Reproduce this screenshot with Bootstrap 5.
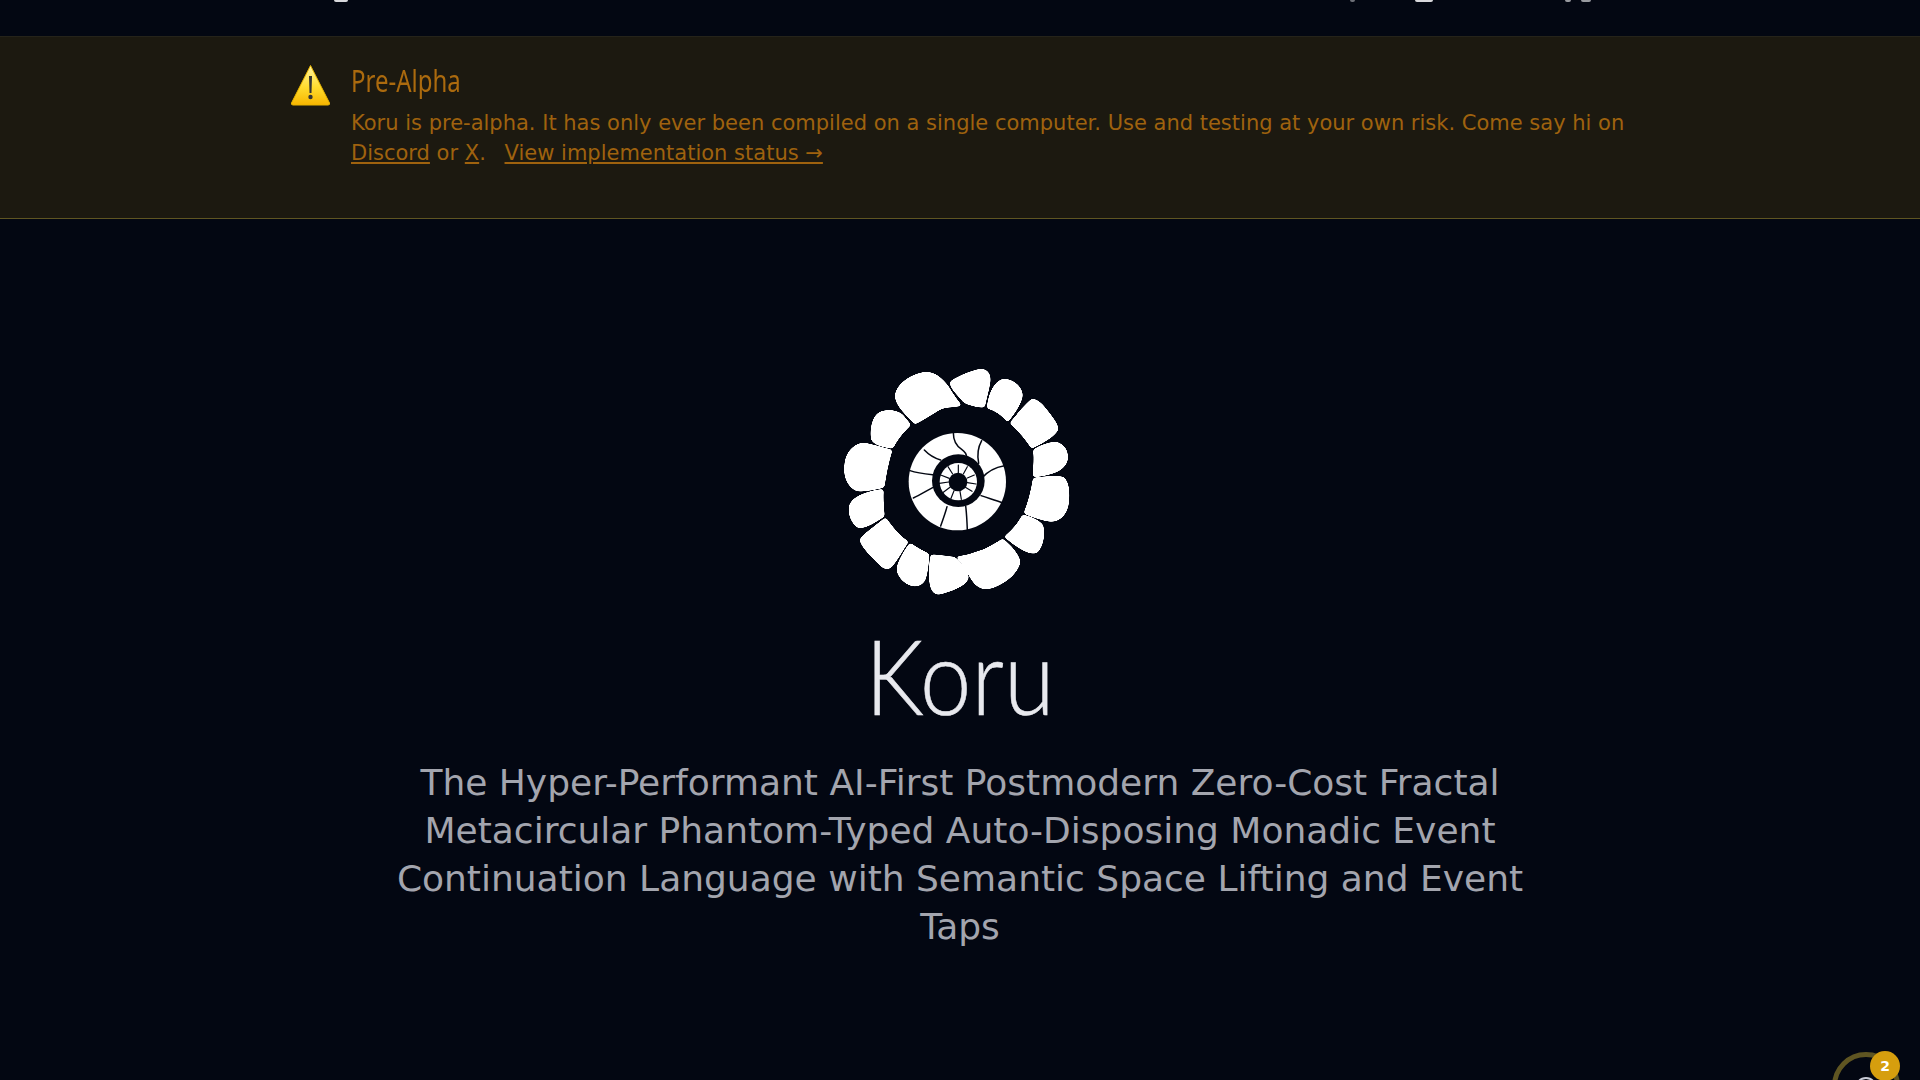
<!DOCTYPE html>
<html lang="en"><head><meta charset="utf-8"><title>Koru</title>
<link href="https://cdn.jsdelivr.net/npm/bootstrap@5.3.0/dist/css/bootstrap.min.css" rel="stylesheet">
<style>
html,body{height:100%;overflow:hidden}
body{background:#030712;font-family:"DejaVu Sans",sans-serif}
.top-strip{height:36px;overflow:hidden;padding-left:334px}
.frag{display:block;height:2px;background:#d8d8dc;border-radius:0 0 3px 3px}
.frag-a{width:14px}.frag-b{width:5px;margin-left:1002px;opacity:.5}.frag-c{width:18px;margin-left:60px}.frag-d{width:6px;margin-left:132px;opacity:.7}.frag-e{width:10px;margin-left:10px;opacity:.7}
.warn-band{height:183px;background:#1c1910;border-top:1px solid #25231a;border-bottom:1px solid #5f5522;padding:24px 0 0 290px}
.warn-icon{width:41px;height:42px;flex:none;margin-top:3px}
.warn-body{width:1300px;margin-left:20px;color:#9f620e;font-size:21px;line-height:30px}
.warn-title{font-family:"Noto Sans",sans-serif;font-weight:400;font-size:30px;line-height:40px;margin:0 0 7px;color:#ab6a0e;display:block;transform:scaleX(.8);transform-origin:left center}
.warn-body a{color:inherit}
.gap-link{margin-left:12px}
.hero-wrap{padding-top:131px}
.koru-logo{width:280px;height:260px;display:block}
.petal path{filter:url(#rnd)}
.koru-name{font-family:Lato,sans-serif;font-weight:300;font-size:104px;line-height:110px;color:#e8e9ee;margin:10px 0 0;transform:scaleX(.885);-webkit-text-stroke:.6px #e8e9ee}
.koru-sub{width:1160px;font-size:36px;line-height:48px;color:#a3a5ae;margin:29px 0 0}
.float-ring{position:fixed;left:1832px;top:1052px;width:68px;height:68px;border:5px solid #5f5522;border-radius:50%}
.float-inner{position:absolute;left:18px;top:20px;width:22px;height:22px;border:2px solid #c9cbd6;border-radius:50%}
.float-num{position:fixed;left:1870px;top:1051px;width:30px;height:30px;border-radius:50%;background:#d69e0e;color:#fff;font-size:14px;font-weight:700}
</style></head>
<body>
<nav class="top-strip d-flex align-items-start"><span class="frag frag-a"></span><span class="frag frag-b"></span><span class="frag frag-c"></span><span class="frag frag-d"></span><span class="frag frag-e"></span></nav>
<section class="warn-band d-flex align-items-start">
<svg class="warn-icon" viewBox="0 0 41 42"><defs><linearGradient id="wg" x1="0" y1="0" x2="0" y2="1"><stop offset="0" stop-color="#fff3a0"/><stop offset=".55" stop-color="#ffdc2e"/><stop offset="1" stop-color="#f7b500"/></linearGradient></defs><path d="M20.5 1.5 L39.5 39 Q40 41 38 41 L3 41 Q1 41 1.500 39 Z" fill="url(#wg)" stroke="#e8b400" stroke-width="1" stroke-linejoin="round"/><path d="M19 12 h3 l-.5 17 h-2 Z" fill="#333"/><circle cx="20.500" cy="33" r="2.200" fill="#333"/></svg>
<div class="warn-body">
<h2 class="warn-title">Pre-Alpha</h2>
<div>Koru is pre-alpha. It has only ever been compiled on a single computer. Use and testing at your own risk. Come say hi on <a href="#">Discord</a> or <a href="#">X</a>. <a class="gap-link" href="#">View implementation status →</a></div>
</div>
</section>
<main class="hero-wrap d-flex flex-column align-items-center text-center">
<svg class="koru-logo" viewBox="0 0 840 780" aria-label="Koru logo">
<defs><filter id="rnd" x="-15%" y="-15%" width="130%" height="130%"><feGaussianBlur stdDeviation="5"/><feComponentTransfer><feFuncA type="linear" slope="10" intercept="-3.200"/></feComponentTransfer></filter></defs>
<g class="petal" fill="#fff">
<path d="M226 140C228 100 280 70 320 67C350 70 365 85 385 110C400 135 415 155 425 167C400 170 375 170 360 178C340 190 310 210 285 222C260 195 230 170 226 140Z"/>
<path d="M390 98C400 85 460 60 485 58C505 60 512 75 510 95C505 125 497 150 493 172C470 170 445 165 430 155C415 135 395 120 390 98Z"/>
<path d="M502 175C505 140 520 95 550 88C580 88 605 110 607 135C605 160 580 195 563 215C545 195 525 180 502 175Z"/>
<path d="M570 220C590 195 615 165 635 148C650 147 665 160 680 180C695 200 713 220 714 238C705 260 665 280 635 295C620 270 595 240 570 220Z"/>
<path d="M640 300C665 285 690 277 710 277C735 285 745 305 742 330C735 360 700 375 640 380C640 355 645 325 640 300Z"/>
<path d="M640 385C675 380 715 378 730 382C745 395 748 420 746 450C745 485 725 515 690 514C665 510 635 500 612 490C625 460 635 420 640 385Z"/>
<path d="M608 495C630 500 655 510 668 525C675 550 670 590 650 608C625 615 590 590 553 560C575 545 595 520 608 495Z"/>
<path d="M548 567C570 585 595 610 600 635C595 665 560 700 510 715C480 720 465 705 450 680C435 650 420 630 408 620C440 620 470 605 490 600C510 590 530 580 548 567Z"/>
<path d="M403 622C425 640 445 665 445 685C435 710 390 725 355 733C335 730 330 710 328 680C328 655 330 630 333 615C355 615 385 620 403 622Z"/>
<path d="M327 612C325 640 322 670 315 690C305 708 285 712 265 703C240 690 228 665 232 650C240 625 255 600 270 580C285 590 310 605 327 612Z"/>
<path d="M265 575C250 595 235 625 215 650C200 662 190 655 170 635C150 615 125 590 120 570C125 555 165 530 197 503C215 530 240 560 265 575Z"/>
<path d="M193 498C170 515 135 535 115 533C95 520 85 495 88 470C95 445 125 428 190 418C188 445 190 475 193 498Z"/>
<path d="M192 412C160 418 125 428 105 420C80 405 70 375 75 340C80 300 110 278 135 280C160 285 190 295 216 300C205 335 197 375 192 412Z"/>
<path d="M218 295C190 290 165 285 155 270C150 245 155 205 175 190C195 177 230 180 248 195C255 205 265 215 272 225C250 245 230 270 218 295Z"/>
</g>
<circle cx="412" cy="395" r="146" fill="#fff"/>
<circle cx="415" cy="392" r="79" fill="#030712"/>
<circle cx="415" cy="395" r="56" fill="#fff"/>
<g fill="none" stroke="#030712" stroke-width="4.500" stroke-linecap="round">
<path d="M400 248C400 270 405 285 425 298C435 305 440 312 440 322"/>
<path d="M485 272C475 290 470 310 476 340"/>
<path d="M553 347C525 352 505 362 488 382"/>
<path d="M548 459C525 450 505 445 483 437"/>
<path d="M437 468C440 490 441 515 442 540"/>
<path d="M381 470C376 490 368 510 362 528"/>
<path d="M338 413C320 422 300 435 280 444"/>
<path d="M338 374C315 372 292 370 270 362"/>
<path d="M362 330C345 325 330 318 313 300"/>
</g>
<g stroke="#030712" stroke-width="3.500" stroke-linecap="round">
<path d="M415 345V368M442 350L430 372M463 375L442 384M468 402L442 398M456 424L436 412M424 448L420 424M392 448L402 422M368 428L392 410M358 400L386 396M362 375L388 385M384 350L398 372"/>
</g>
<circle cx="414" cy="396" r="28" fill="#030712"/>
</svg>
<h1 class="koru-name">Koru</h1>
<p class="koru-sub">The Hyper-Performant AI-First Postmodern Zero-Cost Fractal Metacircular Phantom-Typed Auto-Disposing Monadic Event Continuation Language with Semantic Space Lifting and Event Taps</p>
</main>
<div class="float-ring"><span class="float-inner"></span></div>
<div class="float-num d-flex align-items-center justify-content-center">2</div>
</body></html>
